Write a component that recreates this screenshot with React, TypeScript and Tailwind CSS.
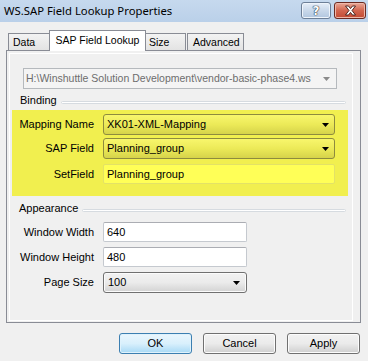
import React from "react";

const font = "font-['Liberation_Sans',Arial,sans-serif]";

function Arrow({ color = "#000" }: { color?: string }) {
  return (
    <svg width="7" height="4" viewBox="0 0 7 4" className="shrink-0">
      <polygon points="0,0 7,0 3.5,4" fill={color} />
    </svg>
  );
}

function YellowCombo({ value }: { value: string }) {
  return (
    <div className="flex h-[21px] w-[232px] items-center rounded-[3px] border border-[#8e8b3e] bg-gradient-to-b from-[#f8f66c] via-[#ecea58] to-[#d6d34a] pl-[3px] pr-[5px] text-[11px] text-black">
      <span>{value}</span>
      <span className="ml-auto">
        <Arrow />
      </span>
    </div>
  );
}

function Label({ text, width }: { text: string; width: string }) {
  return <span className={`${width} shrink-0 text-right text-[11px] text-black`}>{text}</span>;
}

function GroupHeader({ text }: { text: string }) {
  return (
    <div className="flex h-[14px] items-start">
      <span className="text-[11px] leading-[14px] text-black">{text}</span>
      <div className="ml-[4px] mt-[8px] h-[3px] flex-1 rounded-full border border-[#d6dbe0] bg-white" />
    </div>
  );
}

function TextBox({ value, width }: { value: string; width: string }) {
  return (
    <div className={`${width} flex h-[20px] items-center rounded-[2px] border border-[#c5c9cf] border-t-[#abadb3] bg-white pl-[3px] text-[11px] text-black`}>
      {value}
    </div>
  );
}

function Button({ label, primary }: { label: string; primary?: boolean }) {
  return (
    <div
      className={
        primary
          ? "flex h-[21px] w-[73px] items-center justify-center rounded-[3px] border border-[#3c7fb1] bg-gradient-to-b from-[#eaf6fd] via-[#d9f0fc] to-[#a7d9f5] text-[11px] text-black shadow-[inset_0_0_0_1px_#dff2fc]"
          : "flex h-[21px] w-[73px] items-center justify-center rounded-[3px] border border-[#707070] bg-gradient-to-b from-[#f2f2f2] via-[#ebebeb] to-[#cfcfcf] text-[11px] text-black shadow-[inset_0_0_0_1px_#fcfcfc]"
      }
    >
      {label}
    </div>
  );
}

export default function App() {
  return (
    <div className={`${font} flex h-[361px] w-[368px] flex-col overflow-hidden bg-[#f0f0f0]`}>
      {/* title bar */}
      <div className="flex h-[22px] items-start bg-gradient-to-b from-[#c6d9ee] to-[#bad0e9]">
        <span className="ml-[4px] mt-[3px] font-['Noto_Sans',sans-serif] text-[11.3px] leading-[16px] text-black">
          WS.SAP Field Lookup Properties
        </span>
        <div className="ml-auto mr-[2px] mt-[2px] flex gap-[3px]">
          <div className="flex h-[17px] w-[30px] items-center justify-center rounded-[3px] border border-[#6d7f97] bg-gradient-to-b from-[#e6eef8] via-[#c9d8ea] to-[#b1c6df] shadow-[inset_0_0_0_1px_#eef4fb]">
            <span className="font-['DejaVu_Sans',sans-serif] text-[12px] font-bold leading-none text-white [text-shadow:0_0_1px_#243142,0_0_1px_#243142,0_0_1px_#243142]">
              ?
            </span>
          </div>
          <div className="flex h-[17px] w-[32px] items-center justify-center rounded-[3px] border border-[#6b2a22] bg-gradient-to-b from-[#e9a898] via-[#d2654f] to-[#c24a33] shadow-[inset_0_0_0_1px_#eeb8aa]">
            <svg width="13" height="11" viewBox="0 0 13 11">
              <path
                d="M1.5 1 L4.5 1 L6.5 3.6 L8.5 1 L11.5 1 L8 5.5 L11.5 10 L8.5 10 L6.5 7.4 L4.5 10 L1.5 10 L5 5.5 Z"
                fill="#fff"
                stroke="#3e1b16"
                strokeWidth="0.9"
              />
            </svg>
          </div>
        </div>
      </div>

      {/* tabs */}
      <div className="mt-[8px] flex h-[20px] items-end pl-[8px] text-[10.5px]">
        <div className="flex h-[17px] w-[41px] items-center border border-r-0 border-b-0 border-[#898c95] bg-gradient-to-b from-[#f3f3f3] to-[#e3e3e3] pl-[4px] pt-[2px] text-black">
          Data
        </div>
        <div className="relative z-10 -mb-px flex h-[21px] w-[97px] items-center justify-center border border-b-0 border-[#898c95] bg-white pb-[1px] text-black">
          SAP Field Lookup
        </div>
        <div className="flex h-[17px] w-[40px] items-center border border-l-0 border-b-0 border-[#898c95] bg-gradient-to-b from-[#f3f3f3] to-[#e3e3e3] pl-[3px] pt-[2px] text-black">
          Size
        </div>
        <div className="ml-[1px] flex h-[17px] w-[57px] items-center border border-b-0 border-[#898c95] bg-gradient-to-b from-[#f3f3f3] to-[#e3e3e3] pl-[5px] pt-[2px] text-black">
          Advanced
        </div>
      </div>

      {/* tab panel */}
      <div className="ml-[6px] h-[273px] w-[355px] border border-[#898c95] bg-[#f0f0f0]">
        <div className="ml-[2px] mt-[2px] flex h-[268px] w-[344px] flex-col border border-white">
          <div className="ml-[13px] mt-[14px] flex h-[21px] w-[314px] items-center border border-[#b5b9bd] bg-[#f4f4f4] pl-[2px] pr-[6px] text-[10.5px] text-[#6d6d6d]">
            <span className="whitespace-nowrap">H:\Winshuttle Solution Development\vendor-basic-phase4.ws</span>
            <span className="ml-auto">
              <Arrow color="#8a8a8a" />
            </span>
          </div>

          <div className="ml-[10px] mr-[6px] mt-[4px]">
            <GroupHeader text="Binding" />
          </div>

          <div className="ml-[2px] mt-[3px] flex h-[86px] w-[336px] flex-col bg-[#f1ef4f] pt-[4px]">
            <div className="flex items-center gap-[9px]">
              <Label text="Mapping Name" width="w-[82px]" />
              <YellowCombo value="XK01-XML-Mapping" />
            </div>
            <div className="mt-[3px] flex items-center gap-[9px]">
              <Label text="SAP Field" width="w-[82px]" />
              <YellowCombo value="Planning_group" />
            </div>
            <div className="mt-[5px] flex items-center gap-[9px]">
              <Label text="SetField" width="w-[82px]" />
              <div className="flex h-[20px] w-[232px] items-center rounded-[2px] border border-[#e3e266] bg-[#ffff57] pl-[3px] text-[11px] text-black">
                Planning_group
              </div>
            </div>
          </div>

          <div className="ml-[9px] mr-[6px] mt-[5px]">
            <GroupHeader text="Appearance" />
          </div>

          <div className="mt-[7px] flex items-center gap-[9px]">
            <Label text="Window Width" width="w-[84px]" />
            <TextBox value="640" width="w-[144px]" />
          </div>
          <div className="mt-[5px] flex items-center gap-[9px]">
            <Label text="Window Height" width="w-[84px]" />
            <TextBox value="480" width="w-[144px]" />
          </div>
          <div className="mt-[5px] flex items-center gap-[9px]">
            <Label text="Page Size" width="w-[84px]" />
            <div className="flex h-[21px] w-[144px] items-center rounded-[3px] border border-[#707070] bg-gradient-to-b from-[#f2f2f2] via-[#ebebeb] to-[#d3d3d3] pl-[4px] pr-[6px] text-[11px] text-black shadow-[inset_0_0_0_1px_#fbfbfb]">
              <span>100</span>
              <span className="ml-auto">
                <Arrow />
              </span>
            </div>
          </div>
        </div>
      </div>

      {/* dialog buttons */}
      <div className="mt-[10px] flex justify-end gap-[11px] pr-[8px]">
        <Button label="OK" primary />
        <Button label="Cancel" />
        <Button label="Apply" />
      </div>
    </div>
  );
}
